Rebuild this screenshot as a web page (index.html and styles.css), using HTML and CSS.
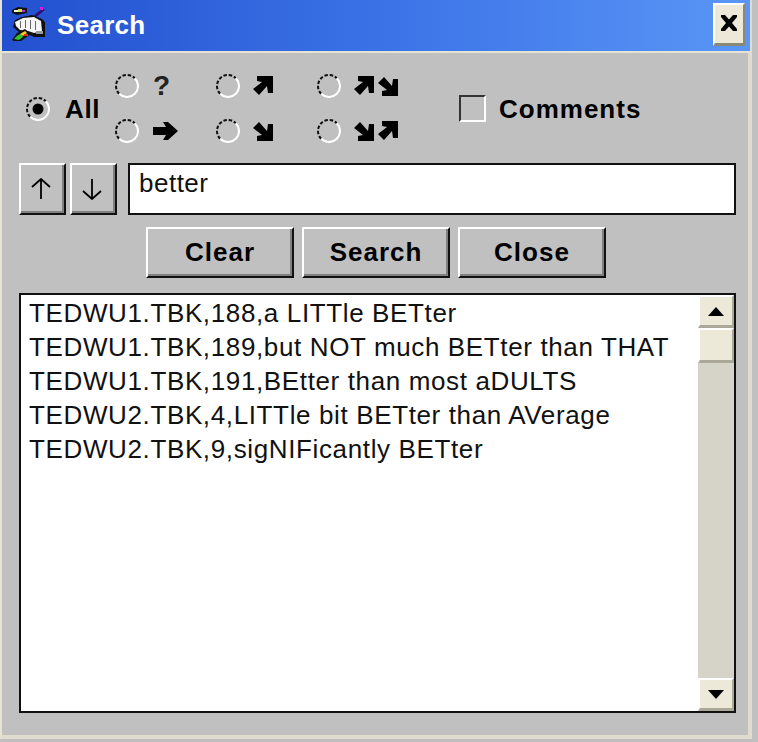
FILE: index.html
```html
<!DOCTYPE html>
<html lang="en">
<head>
<meta charset="utf-8">
<title>Search</title>
<link rel="stylesheet" href="styles.css">
</head>
<body>
<svg class="defs" width="0" height="0" aria-hidden="true">
  <defs>
    <g id="radio-ring">
      <path d="M4.200 19.800A11 11 0 0 1 19.800 4.200" fill="none" stroke="#111" stroke-width="2" stroke-dasharray="3.500 1.800"/>
      <path d="M19.800 4.200A11 11 0 0 1 4.200 19.800" fill="none" stroke="#fff" stroke-width="2"/>
    </g>
    <polygon id="ne" points="4,0 20,0 20,17 15,17 14,10 6,19 0,13 9,6 4,5"/>
  </defs>
</svg>
<div class="window">
  <header class="titlebar">
    <svg class="app-icon" viewBox="0 0 34 34" width="34" height="34">
      <polygon points="0,3 6,0 15,1 15,6 5,8 0,6" fill="#111"/>
      <rect x="2" y="3" width="4" height="2" fill="#f0f0f0"/>
      <rect x="6" y="2" width="4" height="3" fill="#d0e840"/>
      <rect x="10" y="3" width="3" height="2" fill="#b030d0"/>
      <polygon points="21,9 31,1 33,3 23,11" fill="#301070"/>
      <rect x="28" y="0" width="3" height="3" fill="#d020e0"/>
      <polygon points="3,13 10,10 20,8 30,12 33,15 33,30 22,30 16,27 7,25 1,20" fill="#111"/>
      <polygon points="3,15 11,11 22,10 29,14 30,24 22,26 16,24 8,23 4,19" fill="#f6f6f6"/>
      <rect x="8" y="14" width="1" height="7" fill="#666"/>
      <rect x="13" y="13" width="1" height="8" fill="#666"/>
      <rect x="18" y="13" width="1" height="9" fill="#666"/>
      <rect x="23" y="14" width="1" height="9" fill="#666"/>
      <rect x="24" y="24" width="7" height="3" fill="#999"/>
      <polygon points="0,33 5,26 13,22 19,27 9,34 2,34" fill="#111"/>
      <polygon points="2,32 6,28 9,27 11,30 7,33" fill="#30c030"/>
      <polygon points="8,27 13,24 15,26 11,29" fill="#f0d020"/>
      <rect x="12" y="27" width="4" height="2" fill="#e03020"/>
    </svg>
    <h1 class="title">Search</h1>
    <button class="close-x" aria-label="Close window">
      <svg viewBox="0 0 18 16" width="18" height="16"><path d="M1 0h4l4 4.500L13 0h4v2l-5 6 5 6v2h-4L9 11.500 5 16H1v-2l5-6-5-6z" fill="#000"/></svg>
    </button>
  </header>
  <main class="content">
    <section class="filters">
      <div class="all-option">
        <svg class="radio" viewBox="0 0 24 24"><use href="#radio-ring"/><circle cx="12" cy="12" r="5.500" fill="#000"/></svg>
        <span class="big-label">All</span>
      </div>
      <div class="radio-grid">
        <div class="option"><svg class="radio" viewBox="0 0 24 24"><use href="#radio-ring"/></svg><span class="question">?</span></div>
        <div class="option"><svg class="radio" viewBox="0 0 24 24"><use href="#radio-ring"/></svg><svg class="arrow" viewBox="0 0 20 20"><use href="#ne"/></svg></div>
        <div class="option"><svg class="radio" viewBox="0 0 24 24"><use href="#radio-ring"/></svg><svg class="arrow" viewBox="0 0 20 20"><use href="#ne"/></svg><svg class="arrow flip" viewBox="0 0 20 20"><use href="#ne"/></svg></div>
        <div class="option"><svg class="radio" viewBox="0 0 24 24"><use href="#radio-ring"/></svg><svg class="arrow-right" viewBox="0 0 25 18"><polygon points="0,5 13,5 10,0 15,0 25,9 15,18 10,18 13,13 0,13"/></svg></div>
        <div class="option"><svg class="radio" viewBox="0 0 24 24"><use href="#radio-ring"/></svg><svg class="arrow flip" viewBox="0 0 20 20"><use href="#ne"/></svg></div>
        <div class="option"><svg class="radio" viewBox="0 0 24 24"><use href="#radio-ring"/></svg><svg class="arrow flip" viewBox="0 0 20 20"><use href="#ne"/></svg><svg class="arrow" viewBox="0 0 20 20"><use href="#ne"/></svg></div>
      </div>
      <div class="comments">
        <span class="checkbox"></span>
        <span class="big-label">Comments</span>
      </div>
    </section>
    <section class="search-row">
      <button class="raised nav-btn" aria-label="Previous"><svg viewBox="0 0 20 22" width="20" height="22"><path d="M10 21V1.500M1 9l9-8 9 8" fill="none" stroke="#000" stroke-width="1.800"/></svg></button>
      <button class="raised nav-btn" aria-label="Next"><svg viewBox="0 0 20 22" width="20" height="22"><path d="M10 1v19.500M1 13l9 8 9-8" fill="none" stroke="#000" stroke-width="1.800"/></svg></button>
      <div class="text-field">better</div>
    </section>
    <section class="actions">
      <button class="raised action">Clear</button>
      <button class="raised action">Search</button>
      <button class="raised action">Close</button>
    </section>
    <section class="results">
      <ul class="result-list">
        <li>TEDWU1.TBK,188,a LITTle BETter</li>
        <li>TEDWU1.TBK,189,but NOT much BETter than THAT</li>
        <li>TEDWU1.TBK,191,BEtter than most aDULTS</li>
        <li>TEDWU2.TBK,4,LITTle bit BETter than AVerage</li>
        <li>TEDWU2.TBK,9,sigNIFicantly BETter</li>
      </ul>
      <div class="scrollbar">
        <div class="scroll-btn"><span class="tri up"></span></div>
        <div class="thumb"></div>
        <div class="track"></div>
        <div class="scroll-btn"><span class="tri down"></span></div>
      </div>
    </section>
  </main>
</div>
</body>
</html>
```
FILE: styles.css
```css
* { box-sizing: border-box; }
html, body { margin: 0; padding: 0; }
body {
  width: 758px;
  height: 742px;
  background: #c0c0c0;
  font-family: "Liberation Sans", Arial, sans-serif;
  overflow: hidden;
}
.defs { display: block; height: 0; }
.window {
  width: 752px;
  height: 739px;
  background: #c0c0c0;
  border-left: 2px solid #e6e3d4;
  border-right: 4px solid #e0ddce;
  border-bottom: 4px solid #e0ddce;
  display: flex;
  flex-direction: column;
}
.titlebar {
  height: 53px;
  margin-right: -2px;
  border-bottom: 2px solid #e6e3d4;
  background: linear-gradient(90deg, #2350cf 0%, #3a72e6 50%, #5a96f6 100%);
  display: flex;
  align-items: flex-start;
  flex: none;
}
.app-icon { margin: 7px 0 0 10px; flex: none; }
.title {
  margin: 7px 0 0 11px;
  font-size: 26px;
  line-height: 36px;
  font-weight: bold;
  letter-spacing: .3px;
  color: #fff;
}
.close-x {
  margin: 3px 5px 0 auto;
  width: 32px;
  height: 43px;
  padding: 0 0 2px;
  background: #ece9d8;
  border: 0;
  border-top: 2px solid #fff;
  border-left: 2px solid #fff;
  border-right: 2px solid #8a8878;
  border-bottom: 3px solid #8a8878;
  display: flex;
  align-items: center;
  justify-content: center;
}
.content {
  flex: 1;
  padding: 21px 12px 22px 17px;
  display: flex;
  flex-direction: column;
  min-height: 0;
}
.filters { display: flex; align-items: center; height: 69px; flex: none; }
.all-option { display: flex; align-items: center; margin-left: 7px; width: 89px; flex: none; }
.radio { width: 24px; height: 24px; flex: none; display: block; }
.big-label {
  font-size: 26px;
  font-weight: bold;
  line-height: 30px;
  color: #000;
  letter-spacing: 1px;
}
.all-option .big-label { margin-left: 15px; letter-spacing: .6px; }
.radio-grid {
  display: grid;
  grid-template-columns: 101px 101px 81px;
  grid-auto-rows: 24px;
  row-gap: 21px;
  flex: none;
}
.option { display: flex; align-items: center; }
.question { margin-left: 14px; font-size: 28px; font-weight: bold; line-height: 24px; color: #222; }
.arrow { width: 20px; height: 20px; flex: none; margin-left: 4px; }
.option .radio + .arrow { margin-left: 13px; }
.flip { transform: scaleY(-1); }
.arrow-right { width: 25px; height: 18px; margin-left: 14px; flex: none; }
.comments { margin-left: 61px; display: flex; align-items: center; }
.checkbox {
  width: 27px;
  height: 27px;
  flex: none;
  border-top: 2px solid #333;
  border-left: 2px solid #333;
  border-right: 2px solid #fff;
  border-bottom: 2px solid #fff;
}
.comments .big-label { margin-left: 13px; }
.search-row { margin-top: 20px; display: flex; height: 52px; flex: none; }
.raised {
  background: #c0c0c0;
  border-top: 2px solid #fff;
  border-left: 2px solid #fff;
  border-right: 2px solid #111;
  border-bottom: 2px solid #111;
  box-shadow: inset -2px -2px 0 #808080;
  padding: 0;
  font-family: inherit;
  color: #000;
}
.nav-btn {
  width: 47px;
  height: 52px;
  margin-right: 4px;
  padding: 0 4px 0 0;
  display: flex;
  align-items: center;
  justify-content: center;
}
.text-field {
  margin-left: 7px;
  flex: 1;
  height: 52px;
  background: #fff;
  border: 2px solid #111;
  padding: 3px 9px;
  font-size: 26px;
  line-height: 30px;
  letter-spacing: .5px;
  color: #111;
}
.actions { margin-top: 12px; margin-left: 127px; display: flex; gap: 8px; height: 51px; flex: none; }
.action {
  width: 148px;
  height: 51px;
  font-size: 26px;
  font-weight: bold;
  letter-spacing: 1px;
}
.results {
  margin-top: 15px;
  flex: 1;
  min-height: 0;
  display: flex;
  background: #fff;
  border: 2px solid #111;
}
.result-list {
  flex: 1;
  margin: 0;
  padding: 1px 0 0 8px;
  list-style: none;
  font-size: 26px;
  line-height: 34px;
  letter-spacing: .63px;
  color: #111;
  white-space: nowrap;
}
.scrollbar { width: 36px; display: flex; flex-direction: column; flex: none; }
.scroll-btn, .thumb {
  background: #ece9d8;
  border-top: 2px solid #fff;
  border-left: 2px solid #fff;
  border-right: 2px solid #aca899;
  border-bottom: 3px solid #aca899;
  flex: none;
  display: flex;
  align-items: center;
  justify-content: center;
}
.scroll-btn { height: 33px; }
.thumb { height: 35px; }
.track { flex: 1; background: #d6d3c8; }
.tri { width: 0; height: 0; border-left: 8px solid transparent; border-right: 8px solid transparent; }
.tri.up { border-bottom: 9px solid #000; }
.tri.down { border-top: 9px solid #000; }
```
